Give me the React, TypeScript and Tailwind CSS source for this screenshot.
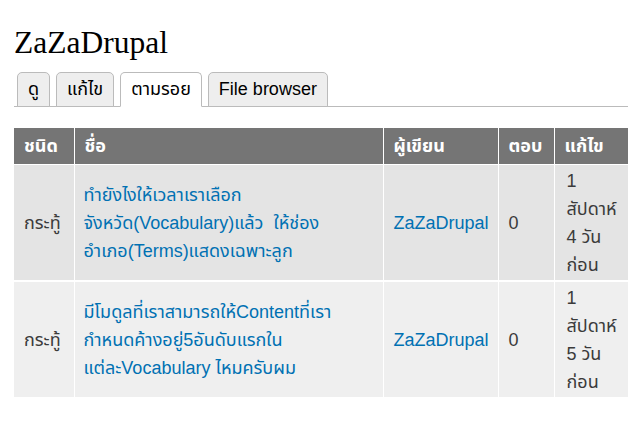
import React from "react";

type Row = {
  type: string;
  title: string[];
  author: string;
  replies: number;
  updated: string[];
  bg: string;
};

const rows: Row[] = [
  {
    type: "กระทู้",
    title: [
      "ทำยังไงให้เวลาเราเลือก",
      "จังหวัด(Vocabulary)แล้ว  ให้ช่อง",
      "อำเภอ(Terms)แสดงเฉพาะลูก",
    ],
    author: "ZaZaDrupal",
    replies: 0,
    updated: ["1", "สัปดาห์", "4 วัน", "ก่อน"],
    bg: "bg-[#e4e4e4]",
  },
  {
    type: "กระทู้",
    title: [
      "มีโมดูลที่เราสามารถให้Contentที่เรา",
      "กำหนดค้างอยู่5อันดับแรกใน",
      "แต่ละVocabulary ไหมครับผม",
    ],
    author: "ZaZaDrupal",
    replies: 0,
    updated: ["1", "สัปดาห์", "5 วัน", "ก่อน"],
    bg: "bg-[#efefef]",
  },
];

const tabs = [
  { label: "ดู", active: false },
  { label: "แก้ไข", active: false },
  { label: "ตามรอย", active: true },
  { label: "File browser", active: false },
];

const sans = "font-['Liberation_Sans','Noto_Sans_Thai','DejaVu_Sans',sans-serif]";

export default function App() {
  return (
    <div className={`min-h-[426px] w-[642px] bg-white px-[14px] pt-[25px] text-[#3b3b3b] ${sans}`}>
      <h1 className="font-['Liberation_Serif',serif] text-[31.5px] leading-[36px] text-black">
        ZaZaDrupal
      </h1>

      <ul className="mt-[11px] flex gap-[6px] border-b border-[#bbbbbb] pl-[3px]">
        {tabs.map((t) => (
          <li
            key={t.label}
            className={`-mb-px rounded-t-[5px] border border-[#bbbbbb] px-[10px] text-[18px] leading-[33px] text-black ${
              t.active ? "border-b-white bg-white" : "bg-[#eeeeee]"
            }`}
          >
            {t.label}
          </li>
        ))}
      </ul>

      <table className="mt-[21px] w-[614px] table-fixed border-collapse text-[18px]">
        <colgroup>
          <col className="w-[60px]" />
          <col className="w-[309px]" />
          <col className="w-[115px]" />
          <col className="w-[56px]" />
          <col className="w-[74px]" />
        </colgroup>
        <thead>
          <tr className="bg-[#757575] text-left text-white">
            {["ชนิด", "ชื่อ", "ผู้เขียน", "ตอบ", "แก้ไข"].map((h) => (
              <th
                key={h}
                className="border-x border-b border-white px-[10px] py-[4px] font-bold leading-[28px] first:border-l-0 last:border-r-0"
              >
                {h}
              </th>
            ))}
          </tr>
        </thead>
        <tbody>
          {rows.map((r, i) => (
            <tr key={i} className={`${r.bg} leading-[28px]`}>
              <td className="border-b-2 border-r border-white px-[10px] pt-[2px] pb-[1px]">{r.type}</td>
              <td className="border-b-2 border-r border-white px-[9px] pt-[2px] pb-[1px] text-[#0071b3]">
                {r.title.map((l) => (
                  <span key={l} className="block whitespace-pre">
                    {l}
                  </span>
                ))}
              </td>
              <td className="border-b-2 border-r border-white px-[10px] pt-[2px] pb-[1px] text-[#0071b3]">
                {r.author}
              </td>
              <td className="border-b-2 border-r border-white px-[10px] pt-[2px] pb-[1px]">{r.replies}</td>
              <td className="border-b-2 border-white px-[12px] pt-[2px] pb-[1px]">
                {r.updated.map((l) => (
                  <span key={l} className="block whitespace-nowrap">
                    {l}
                  </span>
                ))}
              </td>
            </tr>
          ))}
        </tbody>
      </table>
    </div>
  );
}
